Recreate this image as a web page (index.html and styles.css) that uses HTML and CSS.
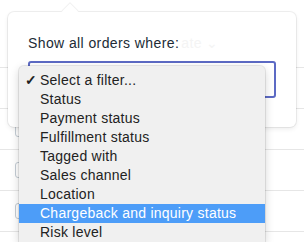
FILE: index.html
```html
<!DOCTYPE html>
<html lang="en">
<head>
    <meta charset="UTF-8">
    <meta name="viewport" content="width=device-width, initial-scale=1.0">
    <title>Order filter</title>
    <link rel="stylesheet" href="styles.css">
</head>
<body>
    <div class="orders">
        <div class="order-row"></div>
        <div class="order-row"><span class="checkbox"></span></div>
        <div class="order-row"><span class="checkbox"></span></div>
        <div class="order-row"><span class="checkbox"></span></div>
        <div class="order-row"><span class="checkbox"></span></div>
    </div>

    <div class="popover">
        <span class="popover-arrow"></span>
        <p class="popover-label">Show all orders where:<span class="ghost">ate &#8964;</span></p>
        <div class="select-box"></div>
    </div>

    <ul class="menu">
        <li class="menu-item"><span class="check">&#10003;</span>Select a filter...</li>
        <li class="menu-item">Status</li>
        <li class="menu-item">Payment status</li>
        <li class="menu-item">Fulfillment status</li>
        <li class="menu-item">Tagged with</li>
        <li class="menu-item">Sales channel</li>
        <li class="menu-item">Location</li>
        <li class="menu-item selected">Chargeback and inquiry status</li>
        <li class="menu-item">Risk level</li>
    </ul>
</body>
</html>
```

FILE: styles.css
```css
body {
    font-family: "Liberation Sans", Arial, sans-serif;
    margin: 0;
    padding: 0;
    background-color: #fff;
    color: #212b36;
    overflow: hidden;
}
.orders {
    padding-top: 27px;
}
.order-row {
    height: 40px;
    border-bottom: 1px solid #e6e6e6;
    display: flex;
    align-items: center;
    padding-left: 15px;
}
.checkbox {
    width: 14px;
    height: 14px;
    border: 1px solid #c4cdd5;
    border-radius: 3px;
    background: #fff;
}
.popover {
    position: absolute;
    left: 8px;
    top: 12px;
    width: 288px;
    height: 115px;
    background: #fff;
    border-radius: 6px;
    box-shadow: 0 0 0 1px rgba(0, 0, 0, 0.06), 0 2px 5px rgba(0, 0, 0, 0.08);
    padding: 0 20px;
    box-sizing: border-box;
}
.popover-arrow {
    position: absolute;
    left: 56px;
    top: -6px;
    width: 12px;
    height: 12px;
    background: #fff;
    transform: rotate(45deg);
    box-shadow: -1px -1px 0 rgba(0, 0, 0, 0.05);
}
.popover-label {
    position: relative;
    margin: 0;
    padding-top: 23px;
    font-size: 14px;
    line-height: 16px;
    letter-spacing: 0.4px;
}
.ghost {
    color: #f4f4f4;
    margin-left: 2px;
}
.select-box {
    margin-top: 10px;
    height: 33px;
    border: 2px solid #5c6ac4;
    border-radius: 3px;
}
.menu {
    position: absolute;
    left: 19px;
    top: 66px;
    width: 246px;
    height: 171px;
    margin: 0;
    padding: 5px 0 0;
    list-style: none;
    background: #f0f0f0;
    border-radius: 5px 5px 0 0;
    box-shadow: 0 0 0 1px rgba(0, 0, 0, 0.08), 0 3px 10px rgba(0, 0, 0, 0.18);
    overflow: hidden;
}
.menu-item {
    position: relative;
    height: 19px;
    line-height: 19px;
    padding-left: 21px;
    font-size: 14px;
    letter-spacing: 0.25px;
    color: #222;
    white-space: nowrap;
}
.check {
    position: absolute;
    left: 6px;
    font-size: 14px;
    font-weight: bold;
}
.selected {
    background: #4d9df8;
    color: #fff;
}
```
